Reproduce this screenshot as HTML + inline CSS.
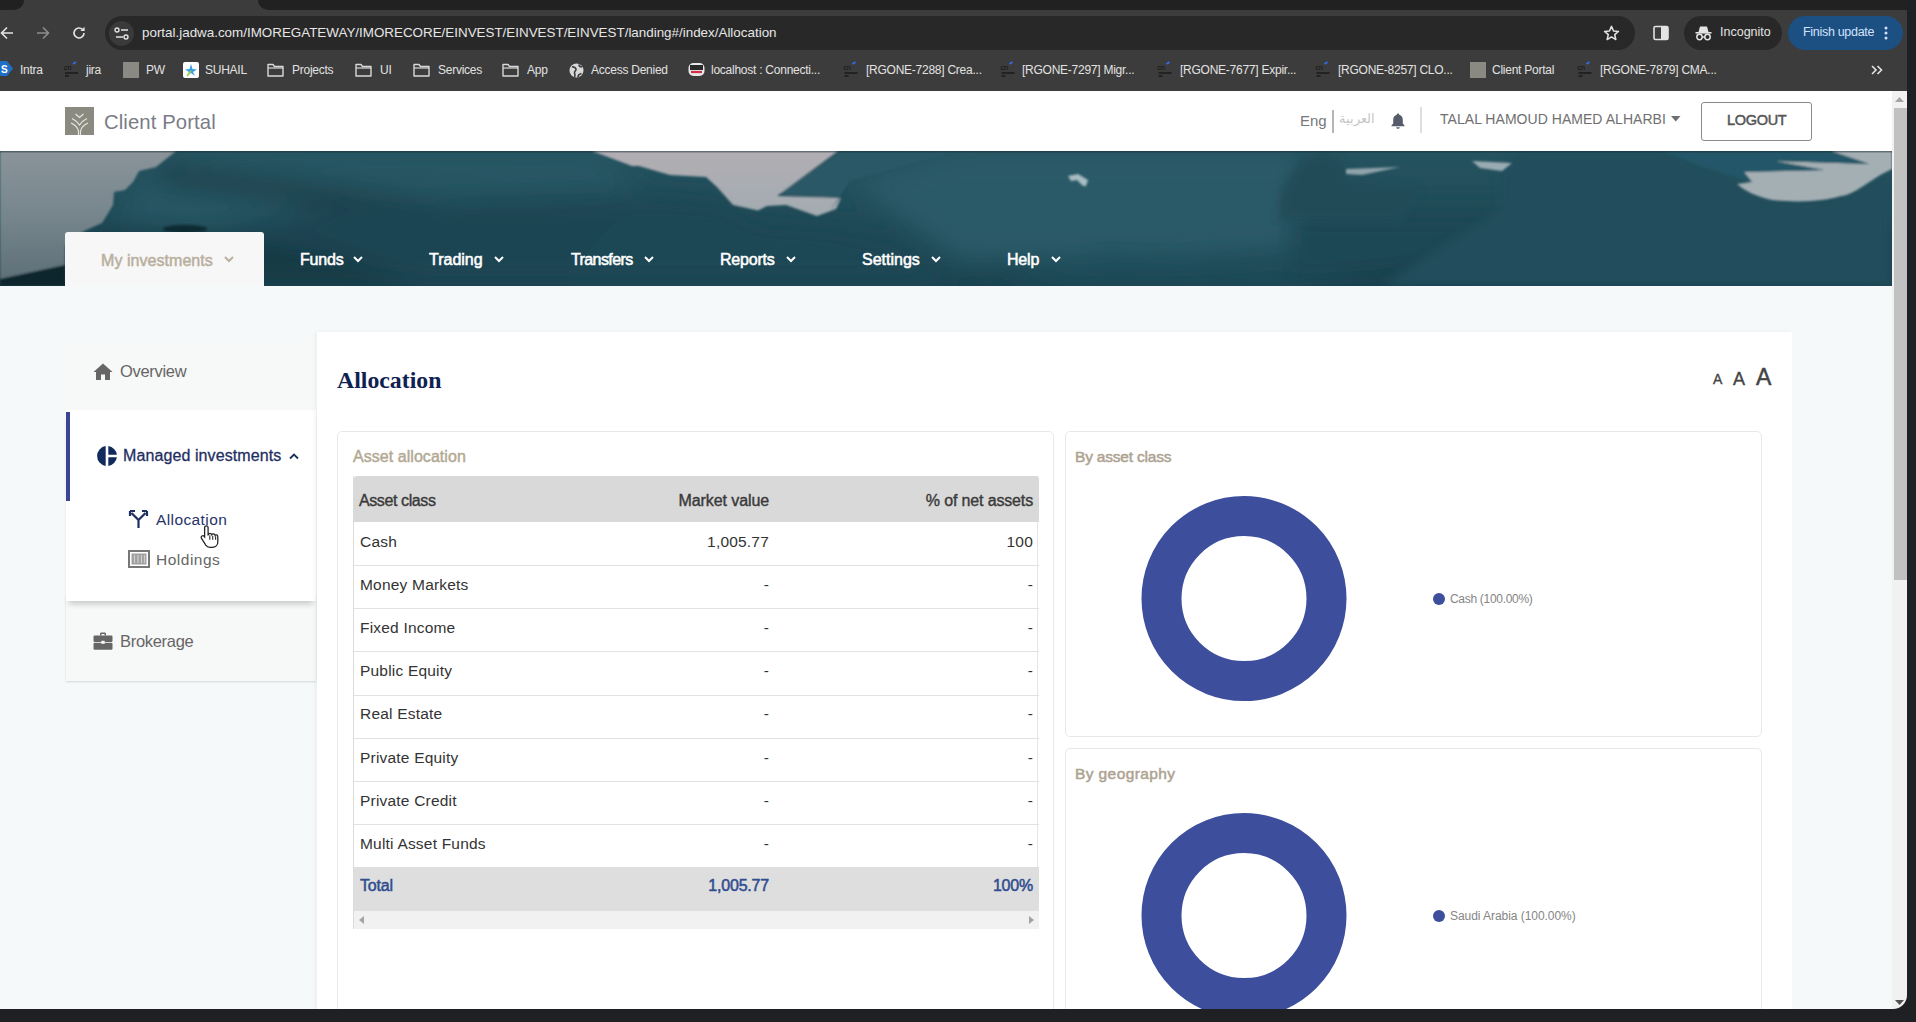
<!DOCTYPE html>
<html><head><meta charset="utf-8">
<style>
*{box-sizing:border-box;margin:0;padding:0}
html,body{width:1916px;height:1022px;overflow:hidden;background:#1f2023;font-family:"Liberation Sans",sans-serif}
.a{position:absolute;white-space:nowrap}
svg{position:absolute;overflow:visible}
#chrome{position:absolute;left:0;top:0;width:1916px;height:91px;background:#3c3c3c;overflow:hidden}
.tabdark{position:absolute;top:0;height:10px;background:#212121}
#url{position:absolute;left:105px;top:16px;width:1530px;height:34px;border-radius:17px;background:#282828}
#urltext{left:142px;top:25px;font-size:13.4px;letter-spacing:0px;color:#e6e6e6}
.bm{top:63px;font-size:12px;color:#e2e2e2;letter-spacing:-0.25px}
.pill{position:absolute;top:16px;height:34px;border-radius:17px}
#page{position:absolute;left:0;top:91px;width:1892px;height:918px;background:#f6f9fa;overflow:hidden}
#hdr{position:absolute;left:0;top:0;width:1892px;height:60px;background:#fff}
#hero{position:absolute;left:0;top:60px;width:1892px;height:135px;background:#1f5466;overflow:hidden}
.nav{top:160px;font-size:16px;color:#fff;-webkit-text-stroke:0.55px #fff;letter-spacing:-0.2px}
#scroll{position:absolute;left:1892px;top:91px;width:15px;height:918px;background:#f1f1f1}
#rb{position:absolute;left:1907px;top:0;width:9px;height:1022px;background:#1f2023}
.side{font-size:16.5px;letter-spacing:-0.3px}
.td{position:absolute;font-size:15.5px;color:#333;white-space:nowrap;letter-spacing:0.2px}
#bb{position:absolute;left:0;top:1009px;width:1916px;height:13px;background:#1f2023}
</style></head>
<body>
<div id="chrome">
  <div class="tabdark" style="left:0;width:24px;border-bottom-right-radius:10px"></div>
  <div class="tabdark" style="left:258px;width:1658px;border-bottom-left-radius:10px"></div>
  <div id="url"></div>
  <div class="a" id="urltext">portal.jadwa.com/IMOREGATEWAY/IMORECORE/EINVEST/EINVEST/EINVEST/landing#/index/Allocation</div>
  <!-- nav icons -->
  <svg style="left:0;top:26px" width="14" height="14" viewBox="0 0 14 14"><path d="M13 7H2M7 1.5L1.5 7 7 12.5" fill="none" stroke="#e3e3e3" stroke-width="1.6"/></svg>
  <svg style="left:36px;top:26px" width="14" height="14" viewBox="0 0 14 14"><path d="M1 7h11M7 1.5L12.5 7 7 12.5" fill="none" stroke="#8d8d8d" stroke-width="1.6"/></svg>
  <svg style="left:72px;top:26px" width="14" height="14" viewBox="0 0 14 14"><path d="M12 7A5 5 0 1 1 10.5 3.4" fill="none" stroke="#e3e3e3" stroke-width="1.6"/><path d="M12.6 0.8V5H8.4z" fill="#e3e3e3"/></svg>
  <div class="a" style="left:109px;top:21px;width:25px;height:25px;border-radius:50%;background:#3a3a3a"></div>
  <svg style="left:114px;top:27px" width="16" height="13" viewBox="0 0 16 13"><circle cx="3" cy="3" r="2" fill="none" stroke="#e3e3e3" stroke-width="1.4"/><path d="M7 3h7M2 10h7" stroke="#e3e3e3" stroke-width="1.6"/><circle cx="12" cy="10" r="2" fill="none" stroke="#e3e3e3" stroke-width="1.4"/></svg>
  <!-- star -->
  <svg style="left:1603px;top:25px" width="17" height="16" viewBox="0 0 24 23"><path d="M12 2l2.9 6.6 7.1.6-5.4 4.7 1.6 7L12 17.2 5.8 20.9l1.6-7L2 9.2l7.1-.6z" fill="none" stroke="#e3e3e3" stroke-width="2.2" stroke-linejoin="round"/></svg>
  <!-- side panel -->
  <svg style="left:1653px;top:25px" width="16" height="16" viewBox="0 0 16 16"><rect x="1" y="1.5" width="14" height="13" rx="1.5" fill="none" stroke="#e3e3e3" stroke-width="1.6"/><rect x="8" y="1.5" width="7" height="13" fill="#e3e3e3"/></svg>
  <div class="pill" style="left:1684px;width:98px;background:#282828"></div>
  <svg style="left:1695px;top:25px" width="17" height="16" viewBox="0 0 17 16"><path d="M3.5 7L5 1.5h7L13.5 7z" fill="#e3e3e3"/><rect x="0.5" y="7" width="16" height="1.6" fill="#e3e3e3"/><circle cx="4.5" cy="12" r="2.7" fill="none" stroke="#e3e3e3" stroke-width="1.5"/><circle cx="12.5" cy="12" r="2.7" fill="none" stroke="#e3e3e3" stroke-width="1.5"/><path d="M7 12h3" stroke="#e3e3e3" stroke-width="1.4"/></svg>
  <div class="a" style="left:1720px;top:25px;font-size:12.5px;color:#e3e3e3">Incognito</div>
  <div class="pill" style="left:1788px;width:115px;background:#1c4f82"></div>
  <div class="a" style="left:1803px;top:25px;font-size:12.5px;color:#d3e3fd;letter-spacing:-0.3px">Finish update</div>
  <svg style="left:1884px;top:25px" width="4" height="16" viewBox="0 0 4 16"><circle cx="2" cy="3" r="1.5" fill="#d3e3fd"/><circle cx="2" cy="8" r="1.5" fill="#d3e3fd"/><circle cx="2" cy="13" r="1.5" fill="#d3e3fd"/></svg>
  <!-- bookmarks -->
  <svg style="left:0;top:61px" width="13" height="15" viewBox="0 0 13 15"><path d="M0 0h7l6 7.5L7 15H0z" fill="#1f6fc5"/><text x="1" y="11.5" font-size="10" font-weight="bold" fill="#fff" font-family="Liberation Sans">S</text></svg>
  <div class="a bm" style="left:20px">Intra</div>
  <svg style="left:64px;top:61px" width="16" height="17" viewBox="0 0 16 17"><text x="0" y="9" font-size="7" fill="#111" font-family="Liberation Sans">cn</text><path d="M9 3l3-2" stroke="#2f6de0" stroke-width="2"/><rect x="1" y="11" width="13" height="2" fill="#222"/><rect x="1" y="14" width="4" height="2" fill="#222"/></svg>
  <div class="a bm" style="left:86px">jira</div>
  <div class="a" style="left:123px;top:62px;width:16px;height:16px;background:#8a8a82"></div>
  <div class="a bm" style="left:146px">PW</div>
  <div class="a" style="left:183px;top:62px;width:16px;height:16px;background:#fff;border-radius:2px"></div>
  <svg style="left:185px;top:63px" width="12" height="14" viewBox="0 0 12 14"><path d="M6 1L7.5 6 12 6.5 8 9 10 13 6 10 2 13 4 9 0 6.5 4.5 6z" fill="#3aa0e0"/><path d="M2 13L6 8" stroke="#9ad040" stroke-width="1.5"/></svg>
  <div class="a bm" style="left:205px">SUHAIL</div>
  <svg style="left:267px;top:63px" width="17" height="14" viewBox="0 0 17 14"><path d="M1 1.5h5l1.5 2H16V13H1z" fill="none" stroke="#d8d8d8" stroke-width="1.4" stroke-linejoin="round"/><path d="M1 5h15" stroke="#d8d8d8" stroke-width="1.2"/></svg>
  <div class="a bm" style="left:292px">Projects</div>
  <svg style="left:355px;top:63px" width="17" height="14" viewBox="0 0 17 14"><path d="M1 1.5h5l1.5 2H16V13H1z" fill="none" stroke="#d8d8d8" stroke-width="1.4" stroke-linejoin="round"/><path d="M1 5h15" stroke="#d8d8d8" stroke-width="1.2"/></svg>
  <div class="a bm" style="left:380px">UI</div>
  <svg style="left:413px;top:63px" width="17" height="14" viewBox="0 0 17 14"><path d="M1 1.5h5l1.5 2H16V13H1z" fill="none" stroke="#d8d8d8" stroke-width="1.4" stroke-linejoin="round"/><path d="M1 5h15" stroke="#d8d8d8" stroke-width="1.2"/></svg>
  <div class="a bm" style="left:438px">Services</div>
  <svg style="left:502px;top:63px" width="17" height="14" viewBox="0 0 17 14"><path d="M1 1.5h5l1.5 2H16V13H1z" fill="none" stroke="#d8d8d8" stroke-width="1.4" stroke-linejoin="round"/><path d="M1 5h15" stroke="#d8d8d8" stroke-width="1.2"/></svg>
  <div class="a bm" style="left:527px">App</div>
  <svg style="left:569px;top:63px" width="15" height="15" viewBox="0 0 15 15"><circle cx="7.5" cy="7.5" r="7" fill="#d8d8d8"/><path d="M3 3.5c2 1 3.5 0.5 4 2.5s-2 2-1.5 4 1 2 0 4M9 14c0-2 1.5-3 3.5-3.5M10 1.5c0 1.5 1 2.5 3 2.5" stroke="#3c3c3c" stroke-width="1.6" fill="none"/></svg>
  <div class="a bm" style="left:591px">Access Denied</div>
  <svg style="left:688px;top:62px" width="17" height="15" viewBox="0 0 17 15"><rect x="0.5" y="1" width="16" height="13" rx="5" fill="#e8e8e8"/><rect x="2" y="3" width="13" height="5" fill="#2a2a2a"/><path d="M3 10h11" stroke="#d0304a" stroke-width="2.2"/></svg>
  <div class="a bm" style="left:711px">localhost : Connecti...</div>
  <svg style="left:843px;top:61px" width="17" height="17" viewBox="0 0 16 17"><text x="0" y="9" font-size="7" fill="#111" font-family="Liberation Sans">cn</text><path d="M9 3l3-2" stroke="#2f6de0" stroke-width="2"/><rect x="1" y="11" width="13" height="2" fill="#222"/><rect x="1" y="14" width="4" height="2" fill="#222"/></svg>
  <div class="a bm" style="left:866px">[RGONE-7288] Crea...</div>
  <svg style="left:1000px;top:61px" width="17" height="17" viewBox="0 0 16 17"><text x="0" y="9" font-size="7" fill="#111" font-family="Liberation Sans">cn</text><path d="M9 3l3-2" stroke="#2f6de0" stroke-width="2"/><rect x="1" y="11" width="13" height="2" fill="#222"/><rect x="1" y="14" width="4" height="2" fill="#222"/></svg>
  <div class="a bm" style="left:1022px">[RGONE-7297] Migr...</div>
  <svg style="left:1157px;top:61px" width="17" height="17" viewBox="0 0 16 17"><text x="0" y="9" font-size="7" fill="#111" font-family="Liberation Sans">cn</text><path d="M9 3l3-2" stroke="#2f6de0" stroke-width="2"/><rect x="1" y="11" width="13" height="2" fill="#222"/><rect x="1" y="14" width="4" height="2" fill="#222"/></svg>
  <div class="a bm" style="left:1180px">[RGONE-7677] Expir...</div>
  <svg style="left:1315px;top:61px" width="17" height="17" viewBox="0 0 16 17"><text x="0" y="9" font-size="7" fill="#111" font-family="Liberation Sans">cn</text><path d="M9 3l3-2" stroke="#2f6de0" stroke-width="2"/><rect x="1" y="11" width="13" height="2" fill="#222"/><rect x="1" y="14" width="4" height="2" fill="#222"/></svg>
  <div class="a bm" style="left:1338px">[RGONE-8257] CLO...</div>
  <div class="a" style="left:1470px;top:62px;width:16px;height:16px;background:#8a8a82"></div>
  <div class="a bm" style="left:1492px">Client Portal</div>
  <svg style="left:1577px;top:61px" width="17" height="17" viewBox="0 0 16 17"><text x="0" y="9" font-size="7" fill="#111" font-family="Liberation Sans">cn</text><path d="M9 3l3-2" stroke="#2f6de0" stroke-width="2"/><rect x="1" y="11" width="13" height="2" fill="#222"/><rect x="1" y="14" width="4" height="2" fill="#222"/></svg>
  <div class="a bm" style="left:1600px">[RGONE-7879] CMA...</div>
  <svg style="left:1871px;top:65px" width="12" height="10" viewBox="0 0 12 10"><path d="M1 1l4 4-4 4M6.5 1l4 4-4 4" fill="none" stroke="#e3e3e3" stroke-width="1.6"/></svg>
</div>
<div id="page">
  <div id="hdr">
    <div class="a" style="left:65px;top:16px;width:29px;height:28px;background:#8b8a80"></div>
    <svg style="left:65px;top:16px" width="29" height="28" viewBox="0 0 29 28"><path d="M10.5 7l4 3.5 4-3.5M7 11.5c3 1.5 5.5 3.5 7.5 6.5 2-3 4.5-5 7.5-6.5M6 16c3.5 1.5 6.5 4 7.5 8v4M23 16c-3.5 1.5-6.5 4-7.5 8v4" fill="none" stroke="#e8e6df" stroke-width="1.2"/></svg>
    <div class="a" style="left:104px;top:19.5px;font-size:20.3px;color:#7a7c86;letter-spacing:0.1px">Client Portal</div>
    <div class="a" style="left:1300px;top:20.5px;font-size:15px;color:#777">Eng</div>
    <div class="a" style="left:1332px;top:19px;width:1.5px;height:23px;background:#b5b5b5"></div>
    <div class="a" style="left:1339px;top:20px;font-size:13px;color:#c6c6c6;font-family:'Liberation Sans'">العربية</div>
    <svg style="left:1391px;top:22px" width="14" height="16" viewBox="0 0 14 16"><path d="M7 0.5c.8 0 1.2.6 1.2 1.2 2.3.6 3.6 2.6 3.6 5.2v3.6l1.7 2v.8H0.5v-.8l1.7-2V6.9c0-2.6 1.3-4.6 3.6-5.2C5.8 1.1 6.2.5 7 .5zM5.3 14.2h3.4c0 1-.8 1.6-1.7 1.6s-1.7-.6-1.7-1.6z" fill="#575c6b"/></svg>
    <div class="a" style="left:1420px;top:16px;width:1.5px;height:26px;background:#dedede"></div>
    <div class="a" style="left:1440px;top:20px;font-size:14px;color:#6f6f6f;letter-spacing:0.04px">TALAL HAMOUD HAMED ALHARBI</div>
    <svg style="left:1671px;top:25px" width="10" height="6" viewBox="0 0 10 6"><path d="M0 0h9.5L4.75 5.5z" fill="#6f6f6f"/></svg>
    <div class="a" style="left:1701px;top:11px;width:111px;height:39px;border:1px solid #8a8a8a;border-radius:3px;background:#fff"></div>
    <div class="a" style="left:1727px;top:21px;font-size:14.5px;color:#555;-webkit-text-stroke:0.5px #555;letter-spacing:-0.3px">LOGOUT</div>
  </div>
  <div id="hero">
    <svg style="left:0;top:0" width="1892" height="135" viewBox="0 0 1892 135">
      <defs>
        <linearGradient id="fog" x1="0" y1="0" x2="0" y2="1"><stop offset="0" stop-color="#8a949a"/><stop offset="0.5" stop-color="#77868d"/><stop offset="1" stop-color="#5f7078"/></linearGradient>
        <linearGradient id="fog2" x1="0" y1="0" x2="0" y2="1"><stop offset="0" stop-color="#b1adb3"/><stop offset="1" stop-color="#a3acb1"/></linearGradient>
        <linearGradient id="tealg" x1="0" y1="0" x2="0" y2="1"><stop offset="0" stop-color="#25535f"/><stop offset="1" stop-color="#1b4350"/></linearGradient>
        <filter id="bl" x="-5%" y="-20%" width="110%" height="140%"><feGaussianBlur stdDeviation="0.8"/></filter>
        <filter id="bl3" x="-10%" y="-30%" width="120%" height="160%"><feGaussianBlur stdDeviation="5"/></filter>
        <filter id="bl2" x="-20%" y="-50%" width="140%" height="200%"><feGaussianBlur stdDeviation="12"/></filter>
      </defs>
      <rect width="1892" height="135" fill="url(#tealg)"/>
      <g filter="url(#bl2)">
        <path d="M176 0H600L640 40 334 50 200 80 110 67z" fill="#275664"/>
        <path d="M160 12L285 28 386 42 461 52 540 70 640 90V112L540 92 461 74 386 64 285 50 160 34z" fill="#1a3f4c"/>
        <path d="M110 70L200 82 334 55 640 45 640 135 0 135z" fill="#1c4553"/>
        <path d="M60 120L90 85 210 82 330 100 420 135 60 135z" fill="#173a45"/>
        <path d="M640 40L720 45 760 66 830 70 900 85 960 135 560 135z" fill="#1d4755"/>
        <path d="M850 30L960 0 1300 0 1300 100 960 110z" fill="#2a5a68"/>
        <path d="M1000 135L1100 100 1300 110 1300 135z" fill="#1f4b59"/>
        <path d="M1290 60L1500 60 1700 80 1892 70 1892 135 1290 135z" fill="#1c4654"/>
        <path d="M1300 135L1500 105 1700 95 1892 80 1892 135z" fill="#163a46"/>
      </g>
      <g filter="url(#bl3)">
        <path d="M1280 40L1302 8 1322 2 1340 8 1350 30 1420 40 1400 70 1280 70z" fill="#204b59"/>
        <path d="M1499 20L1519 0H1663L1740 30 1773 47 1836 50 1892 18V135H1380L1499 60z" fill="#224d5c"/>
      </g>
      <g filter="url(#bl)">
        <path d="M0 0H176L156 16 139 20 133 31 125 39 114 41 113 54 107 64 102 72 84 80 65 95 65 114 0 128z" fill="url(#fog)"/>
        <path d="M0 128L65 114 66 135 0 135z" fill="#11272f"/>
        <ellipse cx="185" cy="78" rx="22" ry="4" fill="#0f2a33"/>
        <path d="M592 0H838L777 45 841 47 836 58 817 65 786 54 767 55 758 59.5 733 54 717 36 706 26 670 24 639 15 632 15z" fill="url(#fog2)"/>
        <path d="M843 0H957L850 30 830 60 840 47 780 43z" fill="#295866"/>
                <path d="M1346 18L1400 16 1362 24 1346 23z" fill="#8fa3aa"/>
        <path d="M1472 10L1512 12 1502 20 1480 17z" fill="#9aacb2"/>
                <path d="M1737 33L1752 31 1744 21 1824 19 1774 10 1869 13 1831 0H1892V18C1870 28 1855 44 1841 45C1825 50 1800 52 1772 49C1755 45 1745 40 1737 33z" fill="#a4afb4"/>
        <path d="M1663 0H1831L1869 13 1774 10 1824 19 1744 21 1752 31 1700 15z" fill="#245767"/>
        <path d="M1068 25l10-2 10 6-2 6-3 0-6-6-6 1z" fill="#a8bcc2"/>
      </g>
    </svg>
    <div class="a" style="left:0;top:0;width:1892px;height:2px;background:linear-gradient(rgba(0,0,0,0.28),rgba(0,0,0,0.08))"></div>
    <div class="a" style="left:65px;top:81px;width:199px;height:55px;background:#f7f7f7;border-radius:3px 3px 0 0"></div>
  </div>
  <div class="a" style="left:101px;top:161px;font-size:16px;color:#b9af9d;-webkit-text-stroke:0.5px #b9af9d;letter-spacing:0.05px">My investments</div>
  <svg style="left:224px;top:165px" width="10" height="7" viewBox="0 0 10 7"><path d="M1 1l4 4 4-4" fill="none" stroke="#b9af9d" stroke-width="2"/></svg>
  <div class="a nav" style="left:300px">Funds</div>
  <svg style="left:353px;top:165px" width="10" height="7" viewBox="0 0 10 7"><path d="M1 1l4 4 4-4" fill="none" stroke="#fff" stroke-width="2"/></svg>
  <div class="a nav" style="left:429px;letter-spacing:0px">Trading</div>
  <svg style="left:494px;top:165px" width="10" height="7" viewBox="0 0 10 7"><path d="M1 1l4 4 4-4" fill="none" stroke="#fff" stroke-width="2"/></svg>
  <div class="a nav" style="left:571px;letter-spacing:-0.6px">Transfers</div>
  <svg style="left:644px;top:165px" width="10" height="7" viewBox="0 0 10 7"><path d="M1 1l4 4 4-4" fill="none" stroke="#fff" stroke-width="2"/></svg>
  <div class="a nav" style="left:720px">Reports</div>
  <svg style="left:786px;top:165px" width="10" height="7" viewBox="0 0 10 7"><path d="M1 1l4 4 4-4" fill="none" stroke="#fff" stroke-width="2"/></svg>
  <div class="a nav" style="left:862px;letter-spacing:0px">Settings</div>
  <svg style="left:931px;top:165px" width="10" height="7" viewBox="0 0 10 7"><path d="M1 1l4 4 4-4" fill="none" stroke="#fff" stroke-width="2"/></svg>
  <div class="a nav" style="left:1007px">Help</div>
  <svg style="left:1051px;top:165px" width="10" height="7" viewBox="0 0 10 7"><path d="M1 1l4 4 4-4" fill="none" stroke="#fff" stroke-width="2"/></svg>

  <!-- sidebar (page coords: y - 91) -->
  <div class="a" style="left:66px;top:249px;width:250px;height:70px;background:#f7f8f8"></div>
  <svg style="left:93px;top:272px" width="20" height="17" viewBox="0 0 20 17"><path d="M10 0.5L19.5 9H17v8h-5v-5.5H8V17H3V9H0.5z" fill="#666"/></svg>
  <div class="a side" style="left:120px;top:271px;color:#666">Overview</div>
  <div class="a" style="left:66px;top:505px;width:250px;height:85px;background:#f7f8f8;box-shadow:0 1px 2px rgba(0,0,0,0.14)"></div>
  <div class="a" style="left:66px;top:319px;width:250px;height:191px;background:#fff;box-shadow:0 6px 6px -3px rgba(0,0,0,0.2)"></div>
  <div class="a" style="left:66px;top:321px;width:4px;height:89px;background:#3a4694"></div>
  <svg style="left:97px;top:355px" width="20" height="20" viewBox="0 0 20 20"><path d="M8.7 0.1A10 10 0 0 0 8.7 19.9z" fill="#132a5e"/><path d="M11.3 0.1A10 10 0 0 1 19.9 8.7H11.3z" fill="#132a5e"/><path d="M11.3 11.3H19.9A10 10 0 0 1 11.3 19.9z" fill="#132a5e"/></svg>
  <div class="a side" style="left:123px;top:356px;color:#1f2f62;font-size:16px;letter-spacing:0.1px;-webkit-text-stroke:0.3px #1f2f62">Managed investments</div>
  <svg style="left:289px;top:362px" width="10" height="7" viewBox="0 0 10 7"><path d="M1 5.5l4-4 4 4" fill="none" stroke="#1f2f62" stroke-width="1.8"/></svg>
  <svg style="left:129px;top:419px" width="19" height="18" viewBox="0 0 19 18"><path d="M9.5 18V10L2.5 3M9.5 10l7-7M1 1h5M1 1v5M18 1h-5M18 1v5" fill="none" stroke="#1f2f62" stroke-width="2.2"/></svg>
  <div class="a side" style="left:156px;top:420px;color:#26336b;font-size:15.5px;letter-spacing:0.4px">Allocation</div>
  <svg style="left:128px;top:459px" width="22" height="18" viewBox="0 0 22 18"><rect x="1" y="1" width="20" height="16" fill="none" stroke="#777" stroke-width="2"/><rect x="3.5" y="3.5" width="15" height="11" fill="#a0a0a0"/><path d="M6.5 5v8M10 5v8M13.5 5v8M16.5 5v8" stroke="#cdcdcd" stroke-width="1.2"/></svg>
  <div class="a side" style="left:156px;top:460px;color:#666;font-size:15.5px;letter-spacing:0.5px">Holdings</div>
  <svg style="left:200px;top:433px" width="18.5" height="23.5" viewBox="0 0 16 20"><path d="M5.5 1.5c.9 0 1.5.6 1.5 1.4v6.3l.2-.1c.2-.7.8-1.1 1.5-1.1.8 0 1.3.5 1.5 1.1.3-.5.8-.8 1.4-.8.8 0 1.4.6 1.5 1.3.2-.2.5-.3.9-.3.8 0 1.4.7 1.4 1.5v4.7c0 2.7-2 4.5-4.6 4.5H8.6c-1.5 0-2.8-.7-3.6-1.9L1.3 12.2c-.5-.7-.3-1.6.4-2 .6-.4 1.4-.3 1.9.3L4 11V2.9c0-.8.6-1.4 1.5-1.4z" fill="#fff" stroke="#222" stroke-width="1.1"/><path d="M8.5 9.5v4M11 10v3.5M13.5 10.5v3" stroke="#222" stroke-width="0.9"/></svg>
    <svg style="left:93px;top:541px" width="20" height="18" viewBox="0 0 20 18"><path d="M7 3.5V2c0-.8.6-1.5 1.4-1.5h3.2c.8 0 1.4.7 1.4 1.5v1.5H11.5V2H8.5v1.5z" fill="#666"/><rect x="0.5" y="3.5" width="19" height="6.5" rx="1.2" fill="#666"/><rect x="0.5" y="10.8" width="19" height="7" rx="1.2" fill="#666"/><rect x="8.3" y="8.8" width="3.4" height="3" fill="#f7f8f8"/></svg>
  <div class="a side" style="left:120px;top:541px;color:#666">Brokerage</div>

  <!-- main card -->
  <div class="a" style="left:317px;top:241px;width:1475px;height:700px;background:#fff;box-shadow:-2px 0 4px rgba(0,0,0,0.05)"></div>
  <div class="a" style="left:337px;top:276px;font-family:'Liberation Serif',serif;font-weight:bold;font-size:23.8px;color:#0f2150">Allocation</div>
  <div class="a" style="left:1713px;top:280px;font-size:14px;color:#444;-webkit-text-stroke:0.35px #444">A</div>
  <div class="a" style="left:1733px;top:278px;font-size:18px;color:#444;-webkit-text-stroke:0.4px #444">A</div>
  <div class="a" style="left:1756px;top:273px;font-size:23px;color:#444;-webkit-text-stroke:0.5px #444">A</div>

  <!-- asset allocation card -->
  <div class="a" style="left:337px;top:340px;width:717px;height:640px;border:1px solid #e8e8e8;border-radius:5px;background:#fff"></div>
  <div class="a" style="left:353px;top:357px;font-size:16px;color:#b3a993;letter-spacing:0.05px;-webkit-text-stroke:0.45px #b3a993">Asset allocation</div>
  <div class="a" id="tbl" style="left:353px;top:385px;width:685px;height:453px;border-left:1px solid #dcdcdc;border-right:1px solid #e6e6e6">
    <div class="a" style="left:0;top:0;width:685px;height:45.5px;background:#d9d9d9;border-radius:3px 3px 0 0"></div>
    <div class="td" style="left:5px;top:15.8px;font-size:16px;color:#3a3a3a;letter-spacing:-0.4px;-webkit-text-stroke:0.4px #3a3a3a">Asset class</div>
    <div class="td" style="right:268px;top:15.8px;font-size:16px;color:#3a3a3a;letter-spacing:-0.1px;-webkit-text-stroke:0.4px #3a3a3a">Market value</div>
    <div class="td" style="right:4px;top:15.8px;font-size:16px;color:#3a3a3a;letter-spacing:-0.15px;-webkit-text-stroke:0.4px #3a3a3a">% of net assets</div>
    <div class="a" style="left:0;top:88.9px;width:685px;height:1px;background:#e2e2e2"></div>
    <div class="td" style="left:6px;top:56.6px">Cash</div>
    <div class="td" style="right:268px;top:56.6px">1,005.77</div>
    <div class="td" style="right:4px;top:56.6px">100</div>
    <div class="a" style="left:0;top:132.1px;width:685px;height:1px;background:#e2e2e2"></div>
    <div class="td" style="left:6px;top:99.8px">Money Markets</div>
    <div class="td" style="right:268px;top:99.8px">-</div>
    <div class="td" style="right:4px;top:99.8px">-</div>
    <div class="a" style="left:0;top:175.3px;width:685px;height:1px;background:#e2e2e2"></div>
    <div class="td" style="left:6px;top:143.0px">Fixed Income</div>
    <div class="td" style="right:268px;top:143.0px">-</div>
    <div class="td" style="right:4px;top:143.0px">-</div>
    <div class="a" style="left:0;top:218.5px;width:685px;height:1px;background:#e2e2e2"></div>
    <div class="td" style="left:6px;top:186.2px">Public Equity</div>
    <div class="td" style="right:268px;top:186.2px">-</div>
    <div class="td" style="right:4px;top:186.2px">-</div>
    <div class="a" style="left:0;top:261.7px;width:685px;height:1px;background:#e2e2e2"></div>
    <div class="td" style="left:6px;top:229.4px">Real Estate</div>
    <div class="td" style="right:268px;top:229.4px">-</div>
    <div class="td" style="right:4px;top:229.4px">-</div>
    <div class="a" style="left:0;top:304.9px;width:685px;height:1px;background:#e2e2e2"></div>
    <div class="td" style="left:6px;top:272.6px">Private Equity</div>
    <div class="td" style="right:268px;top:272.6px">-</div>
    <div class="td" style="right:4px;top:272.6px">-</div>
    <div class="a" style="left:0;top:348.1px;width:685px;height:1px;background:#e2e2e2"></div>
    <div class="td" style="left:6px;top:315.8px">Private Credit</div>
    <div class="td" style="right:268px;top:315.8px">-</div>
    <div class="td" style="right:4px;top:315.8px">-</div>
    
    <div class="td" style="left:6px;top:359.0px">Multi Asset Funds</div>
    <div class="td" style="right:268px;top:359.0px">-</div>
    <div class="td" style="right:4px;top:359.0px">-</div>
    <div class="a" style="left:0;top:391.1px;width:685px;height:44px;background:#dedede"></div>
    <div class="td" style="left:6px;top:401.3px;font-size:16px;color:#2f4d8f;-webkit-text-stroke:0.5px #2f4d8f;letter-spacing:-0.2px">Total</div>
    <div class="td" style="right:268px;top:401.3px;font-size:16px;color:#2f4d8f;-webkit-text-stroke:0.5px #2f4d8f;letter-spacing:-0.2px">1,005.77</div>
    <div class="td" style="right:4px;top:401.3px;font-size:16px;color:#2f4d8f;-webkit-text-stroke:0.5px #2f4d8f;letter-spacing:-0.2px">100%</div>
    <div class="a" style="left:0;top:435.1px;width:685px;height:18px;background:#f1f1f1"></div>
    <svg style="left:5px;top:440px" width="5" height="8" viewBox="0 0 5 8"><path d="M5 0v8L0 4z" fill="#a3a3a3"/></svg>
    <svg style="left:675px;top:440px" width="5" height="8" viewBox="0 0 5 8"><path d="M0 0v8L5 4z" fill="#a3a3a3"/></svg>
  </div>

  <!-- chart cards -->
  <div class="a" style="left:1065px;top:340px;width:697px;height:306px;border:1px solid #e8e8e8;border-radius:5px;background:#fff"></div>
  <div class="a" style="left:1075px;top:357px;font-size:15.5px;color:#ada390;-webkit-text-stroke:0.5px #ada390;letter-spacing:-0.2px">By asset class</div>
  <svg style="left:1140px;top:404px" width="208" height="208" viewBox="0 0 208 208"><circle cx="104" cy="103.6" r="82.5" fill="none" stroke="#3c4e9c" stroke-width="40"/></svg>
  <div class="a" style="left:1433px;top:502px;width:12px;height:12px;border-radius:50%;background:#3c4e9c"></div>
  <div class="a" style="left:1450px;top:501px;font-size:12px;color:#858585;letter-spacing:-0.3px">Cash (100.00%)</div>

  <div class="a" style="left:1065px;top:657px;width:697px;height:320px;border:1px solid #e8e8e8;border-radius:5px;background:#fff"></div>
  <div class="a" style="left:1075px;top:674px;font-size:15.5px;color:#ada390;-webkit-text-stroke:0.5px #ada390;letter-spacing:0.4px">By geography</div>
  <svg style="left:1140px;top:721px" width="208" height="208" viewBox="0 0 208 208"><circle cx="104" cy="103.6" r="82.5" fill="none" stroke="#3c4e9c" stroke-width="40"/></svg>
  <div class="a" style="left:1433px;top:819px;width:12px;height:12px;border-radius:50%;background:#3c4e9c"></div>
  <div class="a" style="left:1450px;top:818px;font-size:12px;color:#858585;letter-spacing:-0.05px">Saudi Arabia (100.00%)</div>
</div>
<div id="scroll"></div>
<div class="a" style="left:1894px;top:108px;width:13px;height:472px;background:#c1c1c1"></div>
<svg style="left:1895px;top:97px" width="9" height="5" viewBox="0 0 9 5"><path d="M0 5L4.5 0 9 5z" fill="#a3a3a3"/></svg>
<svg style="left:1895px;top:1000px" width="9" height="5" viewBox="0 0 9 5"><path d="M0 0L4.5 5 9 0z" fill="#505050"/></svg>
<div id="rb"></div>
<div id="bb"></div>
<svg style="left:1893px;top:995px" width="14" height="14" viewBox="0 0 14 14"><path d="M14 0V14H0A14 14 0 0 0 14 0z" fill="#1f2023"/></svg>
</body></html>
